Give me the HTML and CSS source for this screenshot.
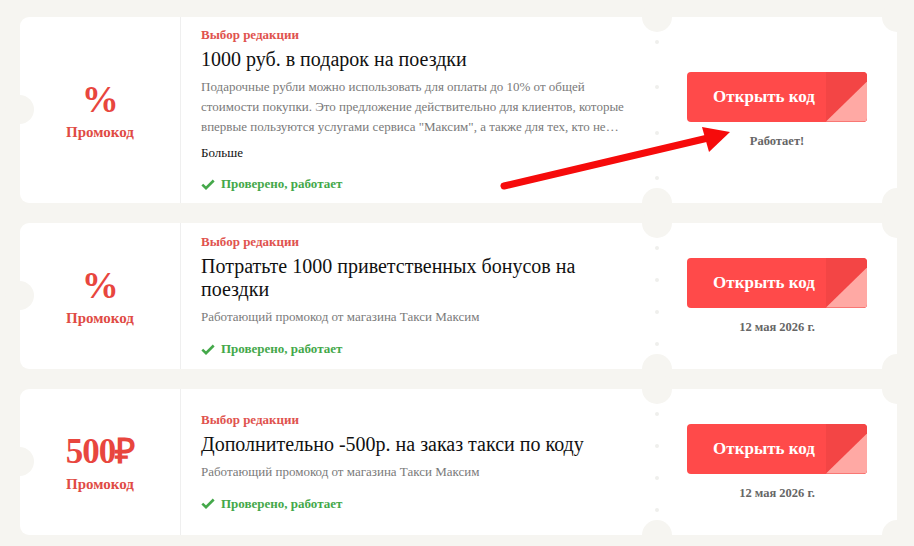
FILE: index.html
```html
<!DOCTYPE html>
<html lang="ru">
<head>
<meta charset="utf-8">
<title>Промокоды Такси Максим</title>
<link rel="stylesheet" href="styles.css">
</head>
<body>
<div class="page">
  <article class="coupon">
    <div class="c-left">
      <div class="c-value">%</div>
      <div class="c-type">Промокод</div>
    </div>
    <div class="c-main">
      <div class="c-label">Выбор редакции</div>
      <div class="c-title">1000 руб. в подарок на поездки</div>
      <p class="c-desc">Подарочные рубли можно использовать для оплаты до 10% от общей стоимости покупки. Это предложение действительно для клиентов, которые впервые пользуются услугами сервиса "Максим", а также для тех, кто не пользовался сервисом более полугода.</p>
      <div class="c-more">Больше</div>
      <div class="c-check"><svg width="14" height="11" viewBox="0 0 14 11"><path d="M1.3 5.6 L5 9.2 L12.7 1.5" fill="none" stroke="#44a84a" stroke-width="2.6"/></svg>Проверено, работает</div>
    </div>
    <div class="c-right">
      <button class="btn">Открыть код</button>
      <div class="c-note">Работает!</div>
    </div>
    <span class="notch n-left"></span><span class="notch n-top"></span><span class="notch n-bottom"></span><span class="notch n-tr"></span><span class="notch n-br"></span>
    <span class="dots"><i></i><i></i><i></i><i></i></span>
  </article>

  <article class="coupon">
    <div class="c-left">
      <div class="c-value">%</div>
      <div class="c-type">Промокод</div>
    </div>
    <div class="c-main">
      <div class="c-label">Выбор редакции</div>
      <div class="c-title">Потратьте 1000 приветственных бонусов на поездки</div>
      <p class="c-desc">Работающий промокод от магазина Такси Максим</p>
      <div class="c-check"><svg width="14" height="11" viewBox="0 0 14 11"><path d="M1.3 5.6 L5 9.2 L12.7 1.5" fill="none" stroke="#44a84a" stroke-width="2.6"/></svg>Проверено, работает</div>
    </div>
    <div class="c-right">
      <button class="btn">Открыть код</button>
      <div class="c-note">12 мая 2026 г.</div>
    </div>
    <span class="notch n-left"></span><span class="notch n-top"></span><span class="notch n-bottom"></span><span class="notch n-tr"></span><span class="notch n-br"></span>
    <span class="dots"><i></i><i></i><i></i><i></i></span>
  </article>

  <article class="coupon">
    <div class="c-left">
      <div class="c-value c-value-sum">500₽</div>
      <div class="c-type">Промокод</div>
    </div>
    <div class="c-main">
      <div class="c-label">Выбор редакции</div>
      <div class="c-title">Дополнительно -500р. на заказ такси по коду</div>
      <p class="c-desc">Работающий промокод от магазина Такси Максим</p>
      <div class="c-check"><svg width="14" height="11" viewBox="0 0 14 11"><path d="M1.3 5.6 L5 9.2 L12.7 1.5" fill="none" stroke="#44a84a" stroke-width="2.6"/></svg>Проверено, работает</div>
    </div>
    <div class="c-right">
      <button class="btn">Открыть код</button>
      <div class="c-note">12 мая 2026 г.</div>
    </div>
    <span class="notch n-left"></span><span class="notch n-top"></span><span class="notch n-bottom"></span><span class="notch n-tr"></span><span class="notch n-br"></span>
    <span class="dots"><i></i><i></i><i></i><i></i></span>
  </article>

  <svg class="arrow" width="914" height="546" viewBox="0 0 914 546">
    <line x1="504" y1="186" x2="708" y2="138" stroke="#f60b0b" stroke-width="7" stroke-linecap="round"/>
    <polygon points="730,132 702,127 709,152" fill="#f60b0b"/>
  </svg>
</div>
</body>
</html>
```
FILE: styles.css
```css
* { box-sizing: border-box; }

html, body {
  margin: 0;
  padding: 0;
  background: #f6f5f1;
}

body {
  font-family: "Liberation Serif", Tinos, "Times New Roman", serif;
  color: #111;
  width: 914px;
  height: 546px;
  overflow: hidden;
}

.page {
  position: relative;
  display: flex;
  flex-direction: column;
  gap: 20px;
  padding: 17px 17px 0 20px;
}

.coupon {
  position: relative;
  display: flex;
  align-items: stretch;
  min-height: 146px;
  background: #fff;
  border-radius: 9px 0 0 9px;
}

.c-left {
  width: 161px;
  flex: none;
  border-right: 1px solid #efefef;
  display: flex;
  flex-direction: column;
  align-items: center;
  justify-content: center;
  color: #e8463e;
  font-weight: bold;
}

.c-value {
  font-size: 37px;
  line-height: 40px;
  letter-spacing: -0.5px;
}

.c-value-sum {
  font-size: 35px;
  letter-spacing: -1px;
}

.c-type {
  font-size: 15px;
  line-height: 18px;
  margin-top: 3px;
  color: #e04b45;
}

.c-main {
  flex: 1;
  min-width: 0;
  padding: 10px 20px 9px 20px;
  display: flex;
  flex-direction: column;
  justify-content: center;
}

.c-label {
  font-size: 13px;
  line-height: 16px;
  font-weight: bold;
  color: #e0534e;
  margin-bottom: 5px;
}

.c-title {
  font-size: 20px;
  line-height: 23px;
  color: #111;
  margin-bottom: 6px;
}

.c-desc {
  margin: 0;
  font-size: 13px;
  line-height: 20px;
  color: #7a7a7a;
  display: -webkit-box;
  -webkit-line-clamp: 3;
  -webkit-box-orient: vertical;
  overflow: hidden;
}

.c-more {
  margin-top: 6px;
  font-size: 13px;
  line-height: 20px;
  color: #111;
}

.c-check {
  margin-top: 12px;
  display: flex;
  align-items: center;
  gap: 6px;
  font-size: 13px;
  line-height: 20px;
  font-weight: bold;
  color: #44a84a;
}

.c-more + .c-check {
  margin-top: 11px;
}

.c-right {
  width: 240px;
  flex: none;
  display: flex;
  flex-direction: column;
  align-items: center;
  justify-content: center;
}

.btn {
  position: relative;
  overflow: hidden;
  width: 180px;
  height: 50px;
  border: 0;
  border-radius: 4px;
  background: #ff4a4a;
  color: #fff;
  font-family: "Liberation Serif", Tinos, "Times New Roman", serif;
  font-weight: bold;
  font-size: 17px;
  padding: 0 26px 0 0;
  cursor: pointer;
}

.btn::before {
  content: "";
  position: absolute;
  top: 0;
  right: 0;
  width: 41px;
  height: 100%;
  background: #f34545;
}

.btn::after {
  content: "";
  position: absolute;
  right: 0;
  bottom: 0;
  width: 41px;
  height: 40px;
  background: #ffa9a4;
  clip-path: polygon(100% 0, 100% 100%, 0 100%);
}

.c-note {
  margin-top: 11px;
  font-size: 12.5px;
  line-height: 16px;
  font-weight: bold;
  color: #666;
}

.notch {
  position: absolute;
  width: 30px;
  height: 30px;
  border-radius: 50%;
  background: #f6f5f1;
}

.n-left { left: -15px; top: 50%; margin-top: -15px; width: 29px; height: 29px; }
.n-top { left: 622px; top: -15px; }
.n-bottom { left: 622px; bottom: -15px; }
.n-tr { right: -15px; top: -15px; }
.n-br { right: -15px; bottom: -15px; }

.dots {
  position: absolute;
  left: 635px;
  top: 23px;
  bottom: 23px;
  width: 4px;
  display: flex;
  flex-direction: column;
  justify-content: space-between;
}

.dots i {
  display: block;
  width: 4px;
  height: 4px;
  border-radius: 50%;
  background: #efefec;
}

.arrow {
  position: absolute;
  left: 0;
  top: 0;
  pointer-events: none;
}
```
